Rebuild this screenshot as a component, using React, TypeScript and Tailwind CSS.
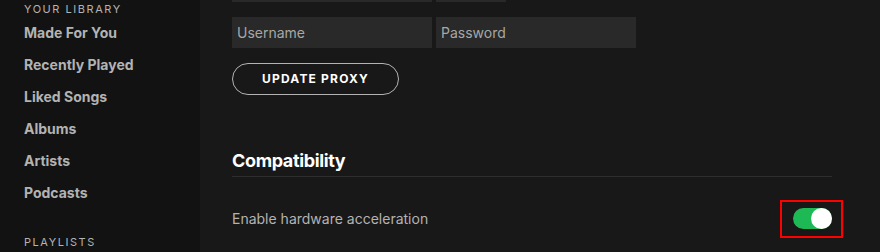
import React from "react";

const LIB = ["Made For You", "Recently Played", "Liked Songs", "Albums", "Artists", "Podcasts"];

export default function App() {
  return (
    <div className="flex h-[252px] w-[880px] overflow-hidden" style={{ fontFamily: "Inter, 'Liberation Sans', sans-serif" }}>
      {/* sidebar */}
      <div className="w-[200px] shrink-0 bg-[#121212] pl-6">
        <p className="h-[17px] pt-[3px] text-[11px] leading-[13px] tracking-[0.14em] text-[#b3b3b3]">YOUR LIBRARY</p>
        {LIB.map((l) => (
          <div key={l} className="flex h-8 items-center text-[14px] font-bold leading-[16px] text-[#b3b3b3]">{l}</div>
        ))}
        <p className="mt-[27px] text-[11px] leading-[13px] tracking-[0.14em] text-[#b3b3b3]">PLAYLISTS</p>
      </div>

      {/* settings */}
      <div className="flex-1 bg-[#181818] pl-8 pr-12">
        <div className="-mt-[29px] flex gap-1">
          <div className="h-[31px] w-[200px] bg-[#292929]" />
          <div className="h-[31px] w-[70px] bg-[#292929]" />
        </div>
        <div className="mt-[15px] flex gap-1">
          <input placeholder="Username" className="h-[31px] w-[200px] bg-[#292929] px-[5px] text-[14px] text-white outline-none placeholder:text-[#a7a7a7]" />
          <input placeholder="Password" className="h-[31px] w-[200px] bg-[#292929] px-[5px] text-[14px] text-white outline-none placeholder:text-[#a7a7a7]" />
        </div>
        <button className="mt-[15px] flex h-[32px] w-[167px] items-center justify-center rounded-full border border-[#b3b3b3] text-[12px] font-bold tracking-[0.1em] text-white">
          UPDATE PROXY
        </button>
        <h2 className="mt-[54px] text-[18px] font-bold leading-[24px] tracking-[-0.02em] text-white">Compatibility</h2>
        <div className="mt-[3px] h-px bg-[#2e2e2e]" />
        <div className="mt-[31px] flex items-center justify-between">
          <span className="text-[14px] text-[#b3b3b3]">Enable hardware acceleration</span>
          <div className="relative">
            <div className="flex h-[21px] w-[39px] items-center justify-end rounded-full bg-[#1db954]">
              <div className="h-[21px] w-[21px] rounded-full bg-white" />
            </div>
            <div className="absolute -left-[13px] -top-[8px] h-[38px] w-[63px] border-2 border-[#ff0000]" />
          </div>
        </div>
      </div>
    </div>
  );
}
